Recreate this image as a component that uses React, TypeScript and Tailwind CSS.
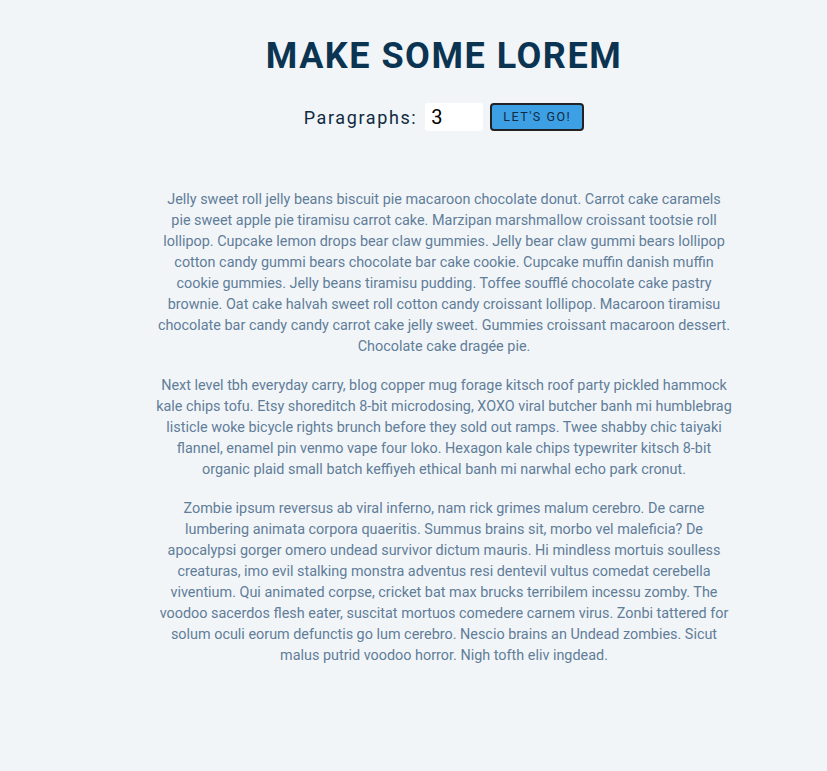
import React, { useState } from 'react';

const paragraphs = [
  'Jelly sweet roll jelly beans biscuit pie macaroon chocolate donut. Carrot cake caramels pie sweet apple pie tiramisu carrot cake. Marzipan marshmallow croissant tootsie roll lollipop. Cupcake lemon drops bear claw gummies. Jelly bear claw gummi bears lollipop cotton candy gummi bears chocolate bar cake cookie. Cupcake muffin danish muffin cookie gummies. Jelly beans tiramisu pudding. Toffee soufflé chocolate cake pastry brownie. Oat cake halvah sweet roll cotton candy croissant lollipop. Macaroon tiramisu chocolate bar candy candy carrot cake jelly sweet. Gummies croissant macaroon dessert. Chocolate cake dragée pie.',
  'Next level tbh everyday carry, blog copper mug forage kitsch roof party pickled hammock kale chips tofu. Etsy shoreditch 8-bit microdosing, XOXO viral butcher banh mi humblebrag listicle woke bicycle rights brunch before they sold out ramps. Twee shabby chic taiyaki flannel, enamel pin venmo vape four loko. Hexagon kale chips typewriter kitsch 8-bit organic plaid small batch keffiyeh ethical banh mi narwhal echo park cronut.',
  'Zombie ipsum reversus ab viral inferno, nam rick grimes malum cerebro. De carne lumbering animata corpora quaeritis. Summus brains sit, morbo vel maleficia? De apocalypsi gorger omero undead survivor dictum mauris. Hi mindless mortuis soulless creaturas, imo evil stalking monstra adventus resi dentevil vultus comedat cerebella viventium. Qui animated corpse, cricket bat max brucks terribilem incessu zomby. The voodoo sacerdos flesh eater, suscitat mortuos comedere carnem virus. Zonbi tattered for solum oculi eorum defunctis go lum cerebro. Nescio brains an Undead zombies. Sicut malus putrid voodoo horror. Nigh tofth eliv ingdead.',
];

export default function App() {
  const [count, setCount] = useState(3);

  return (
    <main className="min-h-screen bg-[#f1f5f8] font-['Roboto',sans-serif] pt-[34px]">
      <section className="w-[576px] ml-[156px] text-center">
        <h3 className="text-[36px] leading-[45px] font-bold uppercase tracking-[1.5px] text-[#0b3452]">
          make some lorem
        </h3>
        <form className="flex items-center justify-center mt-[24px]" onSubmit={e => e.preventDefault()}>
          <label htmlFor="amount" className="text-[18px] tracking-[1.6px] text-[#102a42] mr-[8px]">
            Paragraphs:
          </label>
          <input
            id="amount"
            type="number"
            value={count}
            onChange={e => setCount(Number(e.target.value))}
            className="w-[58px] h-[28px] bg-white rounded-[3px] px-[6px] text-[20px] text-black outline-none border-0 [appearance:textfield]"
          />
          <button
            type="submit"
            className="ml-[7px] w-[94px] h-[28px] bg-[#3ea0e4] border-2 border-[#222] rounded-[4px] text-[12.5px] uppercase tracking-[1.5px] text-[#102a42]"
          >
            let's go!
          </button>
        </form>
        <article className="mt-[58px] text-[14.4px] leading-[21px] text-[#617d98]">
          {paragraphs.slice(0, count).map((p, i) => (
            <p key={i} className="mb-[18px]">{p}</p>
          ))}
        </article>
      </section>
    </main>
  );
}
